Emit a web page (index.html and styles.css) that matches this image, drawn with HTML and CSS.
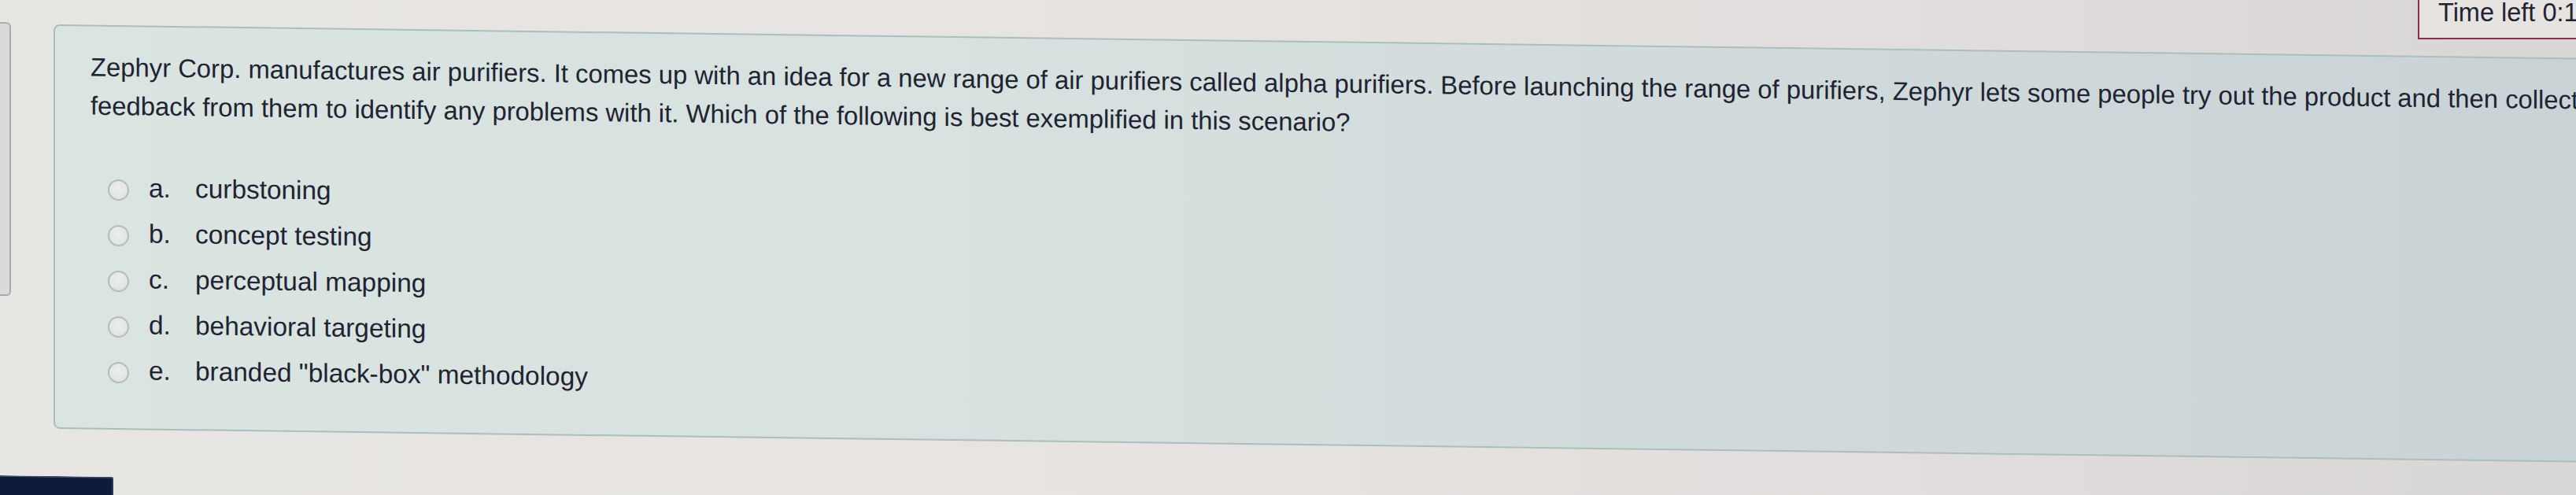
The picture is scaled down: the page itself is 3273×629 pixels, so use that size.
FILE: index.html
```html
<!DOCTYPE html>
<html lang="en">
<head>
<meta charset="utf-8">
<title>Quiz question</title>
<link rel="stylesheet" href="styles.css">
</head>
<body>
<div class="page">
  <div class="layout">
    <aside class="side"></aside>
    <section class="card">
      <div class="qtext">Zephyr Corp. manufactures air purifiers. It comes up with an idea for a new range of air purifiers called alpha purifiers. Before launching the range of purifiers, Zephyr lets some people try out the product and then collects feedback from them to identify any problems with it. Which of the following is best exemplified in this scenario?</div>
      <div class="answers">
        <label class="opt"><span class="radio"></span><span class="letter">a.</span><span class="atext">curbstoning</span></label>
        <label class="opt"><span class="radio"></span><span class="letter">b.</span><span class="atext">concept testing</span></label>
        <label class="opt"><span class="radio"></span><span class="letter">c.</span><span class="atext">perceptual mapping</span></label>
        <label class="opt"><span class="radio"></span><span class="letter">d.</span><span class="atext">behavioral targeting</span></label>
        <label class="opt"><span class="radio"></span><span class="letter">e.</span><span class="atext">branded "black-box" methodology</span></label>
      </div>
    </section>
  </div>
  <div class="footer"><div class="navbtn"></div></div>
</div>
<div class="timer">Time left 0:1</div>
</body>
</html>
```
FILE: styles.css
```css
html, body {
  margin: 0;
  padding: 0;
  overflow: hidden;
  width: 3273px;
  height: 629px;
}
body {
  position: relative;
  background: linear-gradient(90deg, #e8e6e3 0%, #e6e3e1 45%, #e0dddc 75%, #d9d6d6 100%);
  font-family: "Liberation Sans", Arial, Helvetica, sans-serif;
  color: #1f2332;
}
.page {
  transform: skewY(0.76deg);
  transform-origin: 0 0;
}
.layout {
  display: flex;
  align-items: flex-start;
  padding-top: 28px;
}
.side {
  flex: none;
  width: 12px;
  height: 344px;
  background: #dadada;
  border: 2px solid #a9aaab;
  border-left: none;
  border-radius: 0 6px 6px 0;
}
.card {
  flex: none;
  width: 3400px;
  margin-left: 54px;
  margin-top: 2px;
  padding: 27px 0 44px 45px;
  background: linear-gradient(90deg, #dae4e1 0%, #d7e1df 35%, #d0dadb 65%, #c8d2d5 100%);
  border: 2px solid #a8bfbe;
  border-radius: 8px;
  box-sizing: border-box;
}
.qtext {
  width: 3250px;
  font-size: 32.8px;
  line-height: 49px;
}
.answers {
  display: flex;
  flex-direction: column;
  margin-top: 51px;
  margin-left: 22px;
}
.opt {
  display: flex;
  align-items: flex-start;
  height: 58px;
  font-size: 33.4px;
  line-height: 58px;
}
.radio {
  flex: none;
  width: 23px;
  height: 23px;
  margin-top: 18px;
  border: 2px solid #b6bbbc;
  border-radius: 50%;
  background: radial-gradient(circle at 50% 40%, #eceeee 0%, #e3e6e6 60%, #d8dcdc 100%);
}
.letter {
  flex: none;
  width: 59px;
  margin-left: 25px;
}
.atext {
  white-space: nowrap;
}
.footer {
  padding-top: 60px;
}
.navbtn {
  width: 142px;
  height: 40px;
  background: #0f1b3b;
  border-top: 2px solid #3a4766;
  border-right: 2px solid #2a3656;
  border-radius: 0 3px 0 0;
}
.timer {
  position: absolute;
  top: -20px;
  left: 3072px;
  width: 260px;
  height: 70px;
  box-sizing: border-box;
  padding: 18px 0 0 24px;
  border-left: 2px solid #8c2e4b;
  border-bottom: 2px solid #8c2e4b;
  background: #e6e3e1;
  font-size: 32.5px;
  line-height: 36px;
  white-space: nowrap;
  color: #1f2332;
}
```
